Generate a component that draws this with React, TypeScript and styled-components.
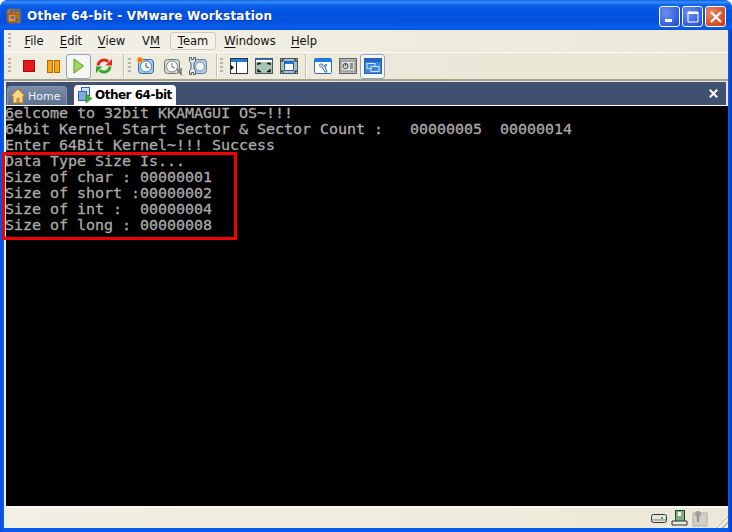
import React from "react";
import styled, { createGlobalStyle } from "styled-components";

const Global = createGlobalStyle`
  html, body { margin: 0; padding: 0; background: #fff; }
  body { width: 732px; height: 532px; overflow: hidden; font-family: "Liberation Sans", Arial, sans-serif; }
`;

const Win = styled.div`
  position: relative;
  width: 732px;
  height: 532px;
  box-sizing: border-box;
  display: flex;
  flex-direction: column;
  background: linear-gradient(90deg, #0a50e0 0, #0a5cf0 4px, #0a5cf0 728px, #0838c8 732px);
  border-radius: 8px 8px 0 0;
  overflow: hidden;
`;
const TitleBar = styled.div`
  height: 28px;
  padding: 2px 6px 0 6px;
  flex: none;
  display: flex;
  align-items: center;
  gap: 5px;
  background: linear-gradient(180deg, #0a5ae8 0, #3c90f8 2px, #0c62ea 5px, #0454e4 10px, #0450dc 22px, #0860f0 27px, #0650dc 30px);
`;
const TitleText = styled.div`
  flex: 1;
  color: #fff;
  font-family: "DejaVu Sans", sans-serif;
  font-size: 12px;
  font-weight: 700;
  letter-spacing: 0.24px;
  text-shadow: 1px 1px 0 #0838a8;
  white-space: nowrap;
`;
const CapButtons = styled.div`
  display: flex;
  gap: 2px;
  margin-top: 1px;
`;
const CapButton = styled.div<{ $red?: boolean }>`
  width: 21px;
  height: 21px;
  box-sizing: border-box;
  border: 1px solid #fff;
  border-radius: 3px;
  display: flex;
  align-items: center;
  justify-content: center;
  background: ${(p) =>
    p.$red
      ? "radial-gradient(circle at 30% 30%, #ec8a68, #d8542c 60%, #c03a12)"
      : "radial-gradient(circle at 30% 30%, #6a90ee, #3a66dc 60%, #2448c0)"};
`;
const Client = styled.div`
  flex: 1;
  margin: 0 4px 4px;
  display: flex;
  flex-direction: column;
  background: linear-gradient(90deg, #f0eee2, #e9e6d6 50%, #ece9d8);
  min-height: 0;
`;
const MenuBar = styled.div`
  height: 22px;
  flex: none;
  display: flex;
  align-items: center;
  border-bottom: 1px solid #fbfaf4;
  padding-left: 4px;
  background: linear-gradient(90deg, #f2f0e6, #ece9da);
`;
const Grip = styled.div<{ $m: number }>`
  width: 3px;
  height: 16px;
  margin-right: ${(p) => p.$m}px;
  flex: none;
  background: repeating-linear-gradient(180deg, #b8b5a4 0 2px, transparent 2px 4px);
`;
const MenuItem = styled.div<{ $hot?: boolean; $w: number }>`
  width: ${(p) => p.$w}px;
  height: 18px;
  box-sizing: border-box;
  display: flex;
  align-items: center;
  justify-content: center;
  font-family: "DejaVu Sans", sans-serif;
  font-size: 11.5px;
  color: #111;
  border-radius: 3px;
  border: 1px solid ${(p) => (p.$hot ? "#cfccbc" : "transparent")};
  background: ${(p) => (p.$hot ? "#f3f1e8" : "transparent")};
  u { text-decoration: underline; text-underline-offset: 2px; }
`;
const ToolBar = styled.div`
  height: 26px;
  flex: none;
  display: flex;
  align-items: center;
  padding-left: 4px;
  background: linear-gradient(90deg, #efede0, #e9e6d5);
  border-bottom: 2px solid #a5a28e;
`;
const Sep = styled.div`
  width: 1px;
  height: 24px;
  background: #c4c1b0;
  border-right: 1px solid #fdfcf6;
  flex: none;
`;
const ToolIcon = styled.div<{ $w?: number; $on?: boolean }>`
  width: ${(p) => p.$w ?? 25}px;
  height: 25px;
  box-sizing: border-box;
  flex: none;
  display: flex;
  align-items: center;
  justify-content: center;
  border-radius: 3px;
  border: 1px solid ${(p) => (p.$on ? "#8fa6bd" : "transparent")};
  background: ${(p) => (p.$on ? "#f6f6f2" : "transparent")};
`;
const Gap = styled.div<{ $w: number }>`
  width: ${(p) => p.$w}px;
  flex: none;
`;
const TabStrip = styled.div`
  flex: none;
  height: 23px;
  margin: 1px 2px 0;
  background: #3f5070;
  border-bottom: 1px solid #fff;
  display: flex;
  align-items: flex-end;
  padding-left: 1px;
`;
const HomeTab = styled.div`
  width: 60px;
  height: 19px;
  box-sizing: border-box;
  display: flex;
  align-items: center;
  gap: 2px;
  padding-left: 2px;
  background: linear-gradient(180deg, #7b8ca6, #5d7090);
  border: 1px solid #8496ae;
  border-bottom: none;
  border-radius: 4px 4px 0 0;
  color: #f0f2f6;
  font-family: "DejaVu Sans", sans-serif;
  font-size: 11px;
`;
const ActiveTab = styled.div`
  width: 102px;
  height: 20px;
  margin-left: 7px;
  box-sizing: border-box;
  display: flex;
  align-items: center;
  gap: 2px;
  padding-left: 3px;
  background: #fff;
  border-radius: 4px 4px 0 0;
  color: #000;
  font-family: "DejaVu Sans", sans-serif;
  font-size: 12px;
  font-weight: 700;
  letter-spacing: -0.5px;
  white-space: nowrap;
`;
const TabClose = styled.div`
  margin-left: auto;
  align-self: center;
  margin-right: 8px;
  display: flex;
`;
const Terminal = styled.div`
  flex: none;
  height: 400px;
  margin-left: 2px;
  background: #000;
  color: #aaa;
  font-family: "DejaVu Sans Mono", "Liberation Mono", monospace;
  font-size: 15px;
  letter-spacing: -0.03px;
  overflow: hidden;
`;
const Row = styled.div`
  height: 16px;
  line-height: 14px;
  margin-left: -1px;
  white-space: pre;
  transform: scaleY(0.94);
  -webkit-text-stroke: 0.3px #aaa;
`;
const Cursor = styled.span`
  text-decoration: underline;
  text-decoration-thickness: 2px;
  text-underline-offset: 1px;
`;
const Highlight = styled.div`
  position: absolute;
  left: 2px;
  top: 152px;
  width: 235px;
  height: 88px;
  box-sizing: border-box;
  border: 3px solid #f40000;
`;
const StatusBar = styled.div`
  flex: 1;
  border-top: 2px solid #fbfaf0;
  display: flex;
  align-items: center;
  justify-content: flex-end;
  gap: 4px;
  background: linear-gradient(90deg, #f2f0e4, #ece9d8);
`;
const ResizeGrip = styled.div`
  width: 13px;
  height: 13px;
  margin-left: 3px;
  align-self: flex-end;
  background: repeating-linear-gradient(135deg, transparent 0 2px, #b4b1a0 2px 3px, #fff 3px 4px);
  clip-path: polygon(100% 0, 100% 100%, 0 100%);
`;

const Clock = ({ x = false }: { x?: boolean }) => (
  <svg width="22" height="22" viewBox="0 0 22 22">
    <rect x="3.500" y="4.500" width="15" height="14" rx="3" fill={x ? "#d6d6d0" : "#a8c8e8"} stroke={x ? "#77776f" : "#2c6aa8"} />
    <circle cx="11" cy="11.500" r="5.500" fill="#f4f8fa" stroke={x ? "#8a8a84" : "#4c86bc"} />
    <path d="M11 8v4l3 1" stroke={x ? "#777" : "#335f90"} fill="none" />
    {x ? <path d="M16 14l4 5v-6" stroke="#77776f" strokeWidth="1.500" fill="none" /> : <circle cx="5" cy="5" r="2.800" fill="#f0682c" stroke="#f8c040" />}
  </svg>
);
const Wrench = () => (
  <svg width="22" height="22" viewBox="0 0 22 22">
    <rect x="6.500" y="4.500" width="13" height="14" rx="3" fill="#b8cee0" stroke="#5d7f9c" />
    <circle cx="13" cy="11.500" r="4.500" fill="#eef4f8" stroke="#6d8fac" />
    <path d="M2.500 2.500h2v2h2v-2h2v4l-1.500 1.500v6l1.500 1.500v4h-2v-2h-2v2h-2v-4L4 14V8L2.500 6.500z" fill="#e2e6ea" stroke="#4d5c6c" />
  </svg>
);
const WinGlyph = ({ kind }: { kind: 0 | 1 | 2 | 3 | 4 | 5 }) => {
  if (kind === 0)
    return (
      <svg width="18" height="16" viewBox="0 0 18 16">
        <rect x=".5" y=".5" width="17" height="15" fill="#fff" stroke="#333" />
        <rect x="1" y="1" width="16" height="3" fill="#1c7ce0" />
        <path d="M6.500 4v11" stroke="#333" />
        <path d="M1 7l3 2.500L1 12z" fill="#111" />
      </svg>
    );
  if (kind === 1)
    return (
      <svg width="18" height="16" viewBox="0 0 18 16">
        <rect x=".5" y=".5" width="17" height="15" fill="#a8c4b6" stroke="#456" />
        <rect x="1" y="1" width="16" height="1" fill="#1c7ce0" />
        <rect x="1" y="2" width="16" height="2" fill="#fff" />
        <path d="M3 7V5.500h3M15 7V5.500h-3M3 11v2.500h3M15 11v2.500h-3" stroke="#111" strokeWidth="1.500" fill="none" />
      </svg>
    );
  if (kind === 2)
    return (
      <svg width="18" height="16" viewBox="0 0 18 16">
        <rect x=".5" y=".5" width="17" height="15" fill="#a8c4b6" stroke="#456" />
        <rect x="4.500" y="3.500" width="9" height="9" fill="#fff" stroke="#1c5cc0" />
        <rect x="5" y="4" width="8" height="2" fill="#1c7ce0" />
        <path d="M2 4V2h2M16 4V2h-2M2 12v2h2M16 12v2h-2" stroke="#111" fill="none" />
      </svg>
    );
  if (kind === 3)
    return (
      <svg width="18" height="16" viewBox="0 0 18 16">
        <rect x=".5" y=".5" width="17" height="15" rx="1" fill="#fff" stroke="#2c6ac8" />
        <rect x="1" y="1" width="16" height="3" fill="#1c7ce0" />
        <path d="M6 6c-1 2 0 3 2 3l3 5h2l-2-5c2-1 2-2 1-3l-1 2H9L8 6z" fill="#fff" stroke="#2c6ac8" />
      </svg>
    );
  if (kind === 4)
    return (
      <svg width="18" height="16" viewBox="0 0 18 16">
        <rect x=".5" y=".5" width="17" height="15" fill="#b8b8b4" stroke="#666" />
        <rect x="2" y="3" width="14" height="10" fill="#dcdcd8" stroke="#888" />
        <circle cx="6.500" cy="8" r="2.500" fill="none" stroke="#444" />
        <path d="M6.500 5v3M11 6h3M11 8h3M11 10h3" stroke="#444" />
      </svg>
    );
  return (
    <svg width="18" height="16" viewBox="0 0 18 16">
      <rect x=".5" y=".5" width="17" height="15" fill="#3c88d8" stroke="#2860b0" />
      <rect x="1" y="1" width="16" height="3" fill="#1c68d0" />
      <rect x="3" y="5.500" width="8" height="5" fill="none" stroke="#cfe4f8" />
      <rect x="7" y="8.500" width="8" height="5" fill="#3c88d8" stroke="#cfe4f8" />
    </svg>
  );
};

export default function App() {
  return (
    <>
      <Global />
      <Win>
        <TitleBar>
          <svg width="16" height="16" viewBox="0 0 16 16">
            <rect x="1" y="1" width="14" height="14" rx="2" fill="#c87020" stroke="#5a6a80" />
            <rect x="5" y="3" width="9" height="9" fill="none" stroke="#5a6a80" strokeWidth="2" />
            <rect x="2" y="6" width="8" height="8" fill="#e89038" stroke="#8c4c10" />
            <rect x="5" y="8" width="3" height="3" fill="#4078b0" />
          </svg>
          <TitleText>Other 64-bit - VMware Workstation</TitleText>
          <CapButtons>
            <CapButton>
              <svg width="14" height="14" viewBox="0 0 14 14">
                <rect x="2" y="9" width="7" height="3" fill="#fff" />
              </svg>
            </CapButton>
            <CapButton>
              <svg width="14" height="14" viewBox="0 0 14 14">
                <path d="M2 2h10v10H2z" fill="none" stroke="#fff" />
                <rect x="2" y="2" width="10" height="2" fill="#fff" />
              </svg>
            </CapButton>
            <CapButton $red>
              <svg width="14" height="14" viewBox="0 0 14 14">
                <path d="M2 2l10 10M12 2L2 12" stroke="#fff" strokeWidth="2.200" />
              </svg>
            </CapButton>
          </CapButtons>
        </TitleBar>
        <Client>
          <MenuBar>
            <Grip $m={6} />
            <MenuItem $w={34}><span><u>F</u>ile</span></MenuItem>
            <MenuItem $w={40}><span><u>E</u>dit</span></MenuItem>
            <MenuItem $w={41}><span><u>V</u>iew</span></MenuItem>
            <MenuItem $w={38}><span>V<u>M</u></span></MenuItem>
            <MenuItem $w={46} $hot><span><u>T</u>eam</span></MenuItem>
            <MenuItem $w={68}><span><u>W</u>indows</span></MenuItem>
            <MenuItem $w={40}><span><u>H</u>elp</span></MenuItem>
          </MenuBar>
          <ToolBar>
            <Grip $m={5} />
            <ToolIcon>
              <svg width="12" height="12" viewBox="0 0 12 12">
                <rect x=".5" y=".5" width="11" height="11" fill="#e81818" stroke="#a01010" />
              </svg>
            </ToolIcon>
            <ToolIcon>
              <svg width="13" height="13" viewBox="0 0 13 13">
                <rect x=".5" y=".5" width="5" height="12" fill="#f8a810" stroke="#b86808" />
                <rect x="7.500" y=".5" width="5" height="12" fill="#f8a810" stroke="#b86808" />
              </svg>
            </ToolIcon>
            <ToolIcon $on>
              <svg width="11" height="16" viewBox="0 0 11 16">
                <path d="M1 1l9.500 7L1 15z" fill="#a0d860" stroke="#4c9c28" />
              </svg>
            </ToolIcon>
            <ToolIcon>
              <svg width="18" height="18" viewBox="0 0 18 18">
                <path d="M3 8.500A6 6 0 0 1 13.300 4.800" fill="none" stroke="#e02820" strokeWidth="3" />
                <path d="M10.500 8.500h6.500V2z" fill="#e02820" />
                <path d="M15 9.500A6 6 0 0 1 4.700 13.200" fill="none" stroke="#30a830" strokeWidth="3" />
                <path d="M7.500 9.500H1V16z" fill="#30a830" />
              </svg>
            </ToolIcon>
            <Gap $w={7} />
            <Sep />
            <Gap $w={3} />
            <Grip $m={2} />
            <ToolIcon><Clock /></ToolIcon>
            <ToolIcon $w={27}><Clock x /></ToolIcon>
            <ToolIcon><Wrench /></ToolIcon>
            <Gap $w={6} />
            <Sep />
            <Gap $w={2} />
            <Grip $m={3} />
            <ToolIcon><WinGlyph kind={0} /></ToolIcon>
            <ToolIcon><WinGlyph kind={1} /></ToolIcon>
            <ToolIcon><WinGlyph kind={2} /></ToolIcon>
            <Gap $w={4} />
            <Sep />
            <Gap $w={3} />
            <ToolIcon><WinGlyph kind={3} /></ToolIcon>
            <ToolIcon><WinGlyph kind={4} /></ToolIcon>
            <ToolIcon $on><WinGlyph kind={5} /></ToolIcon>
          </ToolBar>
          <TabStrip>
            <HomeTab>
              <svg width="16" height="16" viewBox="0 0 16 16">
                <path d="M8 1L1 8h2v7h10V8h2z" fill="#f8d488" stroke="#b87818" />
                <rect x="6.500" y="10" width="3" height="5" fill="#c88828" />
              </svg>
              Home
            </HomeTab>
            <ActiveTab>
              <svg width="16" height="18" viewBox="0 0 16 18">
                <rect x="4.500" y="1.500" width="8" height="8" fill="#cfe0f4" stroke="#2c68b8" />
                <rect x="1.500" y="5.500" width="8" height="9" fill="#7cace0" stroke="#2c68b8" />
                <path d="M9 8l6 4.500L9 17z" fill="#48b030" stroke="#287818" strokeWidth=".6" />
              </svg>
              Other 64-bit
            </ActiveTab>
            <TabClose>
              <svg width="9" height="9" viewBox="0 0 9 9">
                <path d="M.8.800l7.400 7.400M8.200.800L.8 8.200" stroke="#fff" strokeWidth="2" />
              </svg>
            </TabClose>
          </TabStrip>
          <Terminal>
            <Row><Cursor>6</Cursor>elcome to 32bit KKAMAGUI OS~!!!</Row>
            <Row>64bit Kernel Start Sector &amp; Sector Count :   00000005  00000014</Row>
            <Row>Enter 64Bit Kernel~!!! Success</Row>
            <Row>Data Type Size Is...</Row>
            <Row>Size of char : 00000001</Row>
            <Row>Size of short :00000002</Row>
            <Row>Size of int :  00000004</Row>
            <Row>Size of long : 00000008</Row>
          </Terminal>
          <StatusBar>
            <svg width="16" height="12" viewBox="0 0 16 12">
              <rect x=".5" y="2.500" width="15" height="8" rx="2" fill="#e4e4e0" stroke="#333" />
              <path d="M1 8h14" stroke="#888" />
              <rect x="10" y="5" width="2" height="2" fill="#30c030" />
            </svg>
            <svg width="17" height="17" viewBox="0 0 17 17">
              <rect x="4.500" y=".5" width="9" height="11" fill="#80b080" stroke="#204820" />
              <rect x="7" y="2" width="3" height="4" fill="#fff" />
              <path d="M1 11h15v4H1z" fill="#e8e8e4" stroke="#333" />
            </svg>
            <svg width="16" height="17" viewBox="0 0 16 17">
              <rect x="1" y="3" width="14" height="13" fill="#d0d0c8" stroke="#b0b0a8" />
              <circle cx="6" cy="4" r="3" fill="#a0a098" />
              <path d="M6 6v6" stroke="#909088" strokeWidth="2" />
            </svg>
            <ResizeGrip />
          </StatusBar>
        </Client>
        <Highlight />
      </Win>
    </>
  );
}
